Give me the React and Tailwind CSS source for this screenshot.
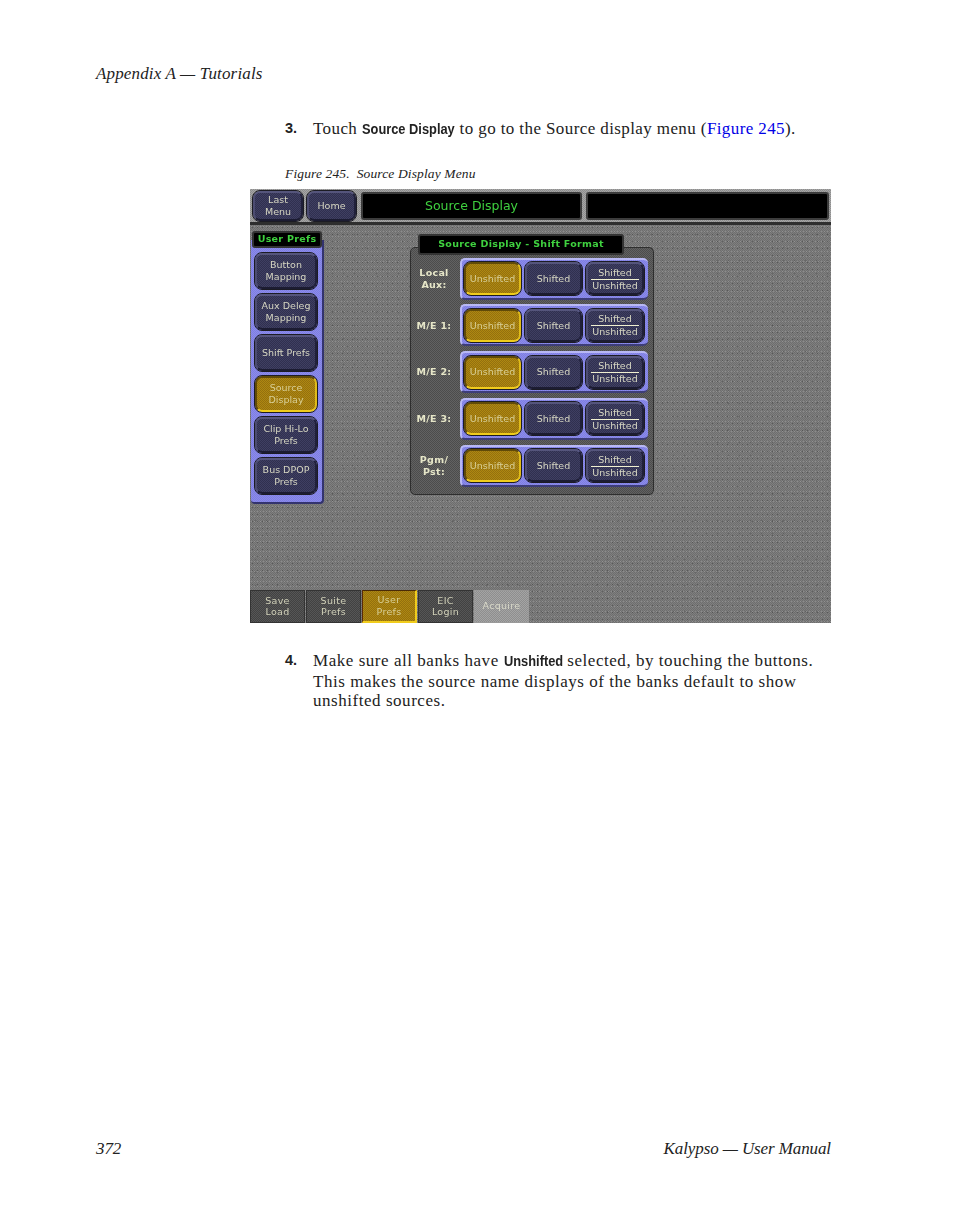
const serif = "[font-family:'Liberation_Serif',serif]";
const sansBold = "font-bold [font-family:'Liberation_Sans',sans-serif]";

// dither layers shared by the gray parts of the touch screen
const grain =
  "bg-[radial-gradient(circle,#4a4a4ab0_0.6px,transparent_1px),radial-gradient(circle,#a2a2a290_0.6px,transparent_1px),radial-gradient(circle,#50505080_0.7px,transparent_1.1px),repeating-conic-gradient(#6e6e6e_0_25%,#7f7f7f_0_50%)] bg-[length:5px_7px,3px_5px,11px_13px,2px_2px]";
const darkFace = "bg-[repeating-conic-gradient(#30304f_0_25%,#3f3f62_0_50%)] bg-[length:2px_2px] border-t-[#55557c] border-l-[#4c4c72] border-r-[#20203a] border-b-[#1c1c32] text-[#d6d6c2]";
const goldFace = "bg-[repeating-conic-gradient(#94700e_0_25%,#ae8812_0_50%)] bg-[length:2px_2px] border-t-[#604a08] border-l-[#604a08] border-r-[#e0bc18] border-b-[#f0cc1c] text-[#d8cf96]";
const blueFace = "bg-[repeating-conic-gradient(#7e7ee2_0_25%,#8c8cea_0_50%)] bg-[length:2px_2px]";

function UiButton({ lines, active, className = "" }) {
  return (
    <div className={`rounded-[7px] border-2 outline outline-[#1c1c24] flex flex-col items-center justify-center text-[9.5px] leading-[11.5px] ${active ? goldFace : darkFace} ${className}`}>
      {lines.map((l) => (
        <span key={l}>{l}</span>
      ))}
    </div>
  );
}

function StackedButton() {
  return (
    <div className={`w-[58px] h-[33px] rounded-[7px] border-2 outline outline-[#1c1c24] flex flex-col items-center justify-center text-[9.5px] leading-[11px] ${darkFace}`}>
      <span className="border-b border-[#f0f0d0] w-[48px] text-center pb-[1px]">Shifted</span>
      <span>Unshifted</span>
    </div>
  );
}

function BankRow({ label }) {
  return (
    <div className="flex items-center h-[42px]">
      <div className="w-[49px] pr-[3px] text-center text-[9.5px] leading-[11.5px] font-bold tracking-[0.3px] text-[#e6e6c8]">
        {label.map((l) => (
          <div key={l}>{l}</div>
        ))}
      </div>
      <div className={`w-[188px] h-[42px] rounded-[5px] border-t-2 border-l-2 border-t-[#b8b8f4] border-l-[#b8b8f4] border-b-2 border-b-[#3d3d78] flex items-center gap-[4px] pl-[2px] ${blueFace}`}>
        <UiButton lines={["Unshifted"]} active className="w-[57px] h-[33px]" />
        <UiButton lines={["Shifted"]} className="w-[57px] h-[33px]" />
        <StackedButton />
      </div>
    </div>
  );
}

function BottomTab({ lines, active, disabled }) {
  let look = "bg-[repeating-conic-gradient(#424242_0_25%,#565656_0_50%)] bg-[length:2px_2px] border-[#333] text-[#d0d0b8]";
  if (active) look = "bg-[repeating-conic-gradient(#94700e_0_25%,#ae8812_0_50%)] bg-[length:2px_2px] border-t-[#4a2a06] border-l-[#5a2a06] border-r-[#f0cc1c] border-b-[#f0cc1c] border-r-2 border-b-2 text-[#d8cf96]";
  if (disabled) look = "bg-[repeating-conic-gradient(#8e8e8e_0_25%,#a4a4a4_0_50%)] bg-[length:2px_2px] border-[#9a9a9a] text-[#d8d8c8]";
  return (
    <div className={`w-[55px] h-[33px] border flex flex-col items-center justify-center text-[9.5px] leading-[11.5px] tracking-[0.3px] ${look}`}>
      {lines.map((l) => (
        <span key={l}>{l}</span>
      ))}
    </div>
  );
}

function Figure() {
  const side = [
    ["Button", "Mapping"],
    ["Aux Deleg", "Mapping"],
    ["Shift Prefs"],
    ["Source", "Display"],
    ["Clip Hi-Lo", "Prefs"],
    ["Bus DPOP", "Prefs"],
  ];
  const banks = [["Local", "Aux:"], ["M/E 1:"], ["M/E 2:"], ["M/E 3:"], ["Pgm/", "Pst:"]];

  return (
    <div className={`w-[581px] h-[434px] flex flex-col blur-[0.3px] [font-family:'DejaVu_Sans',sans-serif] ${grain}`}>
      <div className="h-[36px] shrink-0 flex items-center gap-[4px] pl-[3px] pt-[1px] bg-[repeating-conic-gradient(#8e8e8e_0_25%,#a6a6a6_0_50%)] bg-[length:2px_2px] border-b-[3px] border-[#2e2e2e]">
        <UiButton lines={["Last", "Menu"]} className="w-[50px] h-[30px]" />
        <UiButton lines={["Home"]} className="w-[49px] h-[30px]" />
        <div className="w-[221px] h-[28px] ml-[1px] rounded-[3px] bg-black border-2 border-[#3c3c3c] flex items-center justify-center text-[12.5px] text-[#3fd13f]">
          Source Display
        </div>
        <div className="w-[243px] h-[28px] rounded-[3px] bg-black border-2 border-[#3c3c3c]" />
      </div>

      <div className="flex-1 flex min-h-0">
        <div className="ml-[1px] mt-[6px] w-[73px] h-[273px] flex flex-col">
          <div className="relative z-10 h-[17px] w-[70px] ml-[1px] rounded-[3px] bg-black border-2 border-[#333] flex items-center justify-center text-[9.5px] font-bold tracking-[0.3px] text-[#3fd13f]">
            User Prefs
          </div>
          <div className={`-mt-[8px] flex-1 rounded-b-[4px] border-b-2 border-r-2 border-[#33336e] flex flex-col gap-[5px] pt-[13px] pl-[4px] ${blueFace}`}>
            {side.map((lines, i) => (
              <UiButton key={i} lines={lines} active={i === 3} className="w-[62px] h-[36px]" />
            ))}
          </div>
        </div>

        <div className="ml-[86px] mt-[9px] flex flex-col">
          <div className="relative z-10 ml-[8px] w-[206px] h-[21px] rounded-[3px] bg-black border-2 border-[#333] flex items-center justify-center text-[9.5px] font-bold tracking-[0.3px] text-[#3fd13f]">
            Source Display - Shift Format
          </div>
          <div className="-mt-[8px] w-[244px] h-[248px] rounded-[5px] border border-[#2e2e2e] bg-[repeating-conic-gradient(#4c4c4c_0_25%,#626262_0_50%)] bg-[length:2px_2px] flex flex-col gap-[4.75px] pt-[10px]">
            {banks.map((b) => (
              <BankRow key={b[0]} label={b} />
            ))}
          </div>
        </div>
      </div>

      <div className="h-[33px] shrink-0 flex gap-px">
        <BottomTab lines={["Save", "Load"]} />
        <BottomTab lines={["Suite", "Prefs"]} />
        <BottomTab lines={["User", "Prefs"]} active />
        <BottomTab lines={["EIC", "Login"]} />
        <BottomTab lines={["Acquire"]} disabled />
      </div>
    </div>
  );
}

// the manual's command words are a narrow bold sans, squeezed here from Liberation Sans
function Cmd({ children, width }) {
  return (
    <span className={`inline-block whitespace-nowrap tracking-normal origin-left scale-x-[0.885] text-[14.5px] ${sansBold} ${width}`}>
      {children}
    </span>
  );
}

function Step({ n, tracking, children }) {
  return (
    <div className="flex">
      <span className={`w-[28px] shrink-0 text-[14.5px] ${sansBold}`}>{n}</span>
      <p className={`whitespace-nowrap ${tracking}`}>{children}</p>
    </div>
  );
}

export default function App() {
  return (
    <div className={`w-[954px] h-[1227px] bg-white text-[#222] flex flex-col pl-[96px] pr-[123px] pt-[64px] ${serif} text-[17px] leading-[19.5px]`}>
      <div className="italic h-[19px] tracking-[0.15px]">Appendix A — Tutorials</div>
      <div className="ml-[189px] mt-[36px]">
        <Step n="3." tracking="tracking-[0.4px]">
          Touch <Cmd width="w-[93px]">Source Display</Cmd> to go to the Source display menu (<span className="text-[#0000e6]">Figure 245</span>).
        </Step>
        <div className="italic text-[13.5px] tracking-[0.13px] leading-[16px] mt-[26px]">Figure 245.&nbsp; Source Display Menu</div>
      </div>
      <div className="ml-[154px] mt-[7px]">
        <Figure />
      </div>
      <div className="ml-[189px] mt-[28.5px]">
        <Step n="4." tracking="tracking-[0.54px]">
          Make sure all banks have <Cmd width="w-[59px]">Unshifted</Cmd> selected, by touching the buttons.
          <br />
          This makes the source name displays of the banks default to show
          <br />
          unshifted sources.
        </Step>
      </div>
      <div className="mt-auto mb-[69px] flex justify-between italic tracking-[-0.1px]">
        <span>372</span>
        <span>Kalypso — User Manual</span>
      </div>
    </div>
  );
}
